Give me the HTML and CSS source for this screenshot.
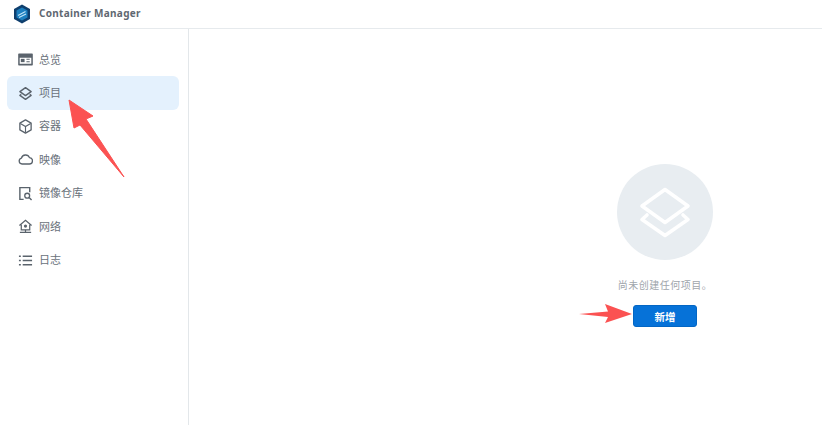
FILE: index.html
```html
<!DOCTYPE html>
<html lang="zh-CN">
<head>
    <meta charset="UTF-8">
    <title>Container Manager</title>
    <link rel="stylesheet" href="styles.css">
</head>
<body>
    <div class="window">
        <!-- Title bar -->
        <div class="title-bar">
            <svg class="logo" width="18" height="20" viewBox="0 0 18 20">
                <path d="M9 0.5L17 5v10l-8 4.500L1 15V5z" fill="#0f3f6e"/>
                <path d="M9 3.500L14.500 6.600v6.800L9 16.500l-5.500-3.100V6.600z" fill="#1c7fc0"/>
                <path d="M5 11.500L12.500 7.500M6 13.500l7-3.500" stroke="#bfe4f7" stroke-width="1.200" fill="none"/>
            </svg>
            <span class="app-name">Container Manager</span>
        </div>

        <div class="main">
            <!-- Sidebar -->
            <div class="sidebar">
                <div class="nav-item">
                    <svg class="nav-icon" viewBox="0 0 16 16">
                        <path fill-rule="evenodd" d="M1 1.500h14a.8.8 0 0 1 .8.8v11.400a.8.8 0 0 1-.8.8H1a.8.8 0 0 1-.8-.8V2.300A.8.8 0 0 1 1 1.500zm.8 4.500v6.500h12.400V6z" fill="#5a636c"/>
                        <rect x="3" y="7.300" width="4" height="3.500" fill="#5a636c"/>
                        <path d="M9 7.800h3.500M9 10.300h3.500" stroke="#5a636c" stroke-width="1.100"/>
                    </svg>
                    <span>总览</span>
                </div>
                <div class="nav-item active">
                    <svg class="nav-icon" viewBox="0 0 16 16">
                        <path d="M8 1.800L14 6l-6 4.200L2 6z" fill="none" stroke="#5a636c" stroke-width="1.500" stroke-linejoin="round"/>
                        <path d="M3.500 9L2 10l6 4.300L14 10l-1.500-1" fill="none" stroke="#5a636c" stroke-width="1.500" stroke-linejoin="round"/>
                    </svg>
                    <span>项目</span>
                </div>
                <div class="nav-item">
                    <svg class="nav-icon" viewBox="0 0 16 16">
                        <path d="M8 1l6 3.400v7.200L8 15l-6-3.400V4.400z" fill="none" stroke="#5a636c" stroke-width="1.400" stroke-linejoin="round"/>
                        <path d="M2.500 4.800L8 8l5.500-3.200M8 8v6.500" fill="none" stroke="#5a636c" stroke-width="1.200"/>
                    </svg>
                    <span>容器</span>
                </div>
                <div class="nav-item">
                    <svg class="nav-icon" viewBox="0 0 16 16">
                        <path d="M4.300 12.800a3.200 3.200 0 0 1-.6-6.300A4.500 4.500 0 0 1 12.200 6a3.400 3.400 0 0 1-.3 6.800z" fill="none" stroke="#5a636c" stroke-width="1.400" stroke-linejoin="round"/>
                    </svg>
                    <span>映像</span>
                </div>
                <div class="nav-item">
                    <svg class="nav-icon" viewBox="0 0 16 16">
                        <path d="M6 14.300H2V1.700h10.500v5" fill="none" stroke="#5a636c" stroke-width="1.500"/>
                        <circle cx="9.800" cy="10.300" r="2.600" fill="none" stroke="#5a636c" stroke-width="1.400"/>
                        <path d="M11.800 12.300l2.700 2.700" stroke="#5a636c" stroke-width="1.500"/>
                    </svg>
                    <span>镜像仓库</span>
                </div>
                <div class="nav-item">
                    <svg class="nav-icon" viewBox="0 0 16 16">
                        <path d="M1.500 7L8 1.500 14.500 7M3.500 6v5.500h9V6" fill="none" stroke="#5a636c" stroke-width="1.300"/>
                        <circle cx="8" cy="7.500" r="1.700" fill="#5a636c"/>
                        <path d="M8 11.500v2.500M2 14.300h12" stroke="#5a636c" stroke-width="1.300"/>
                    </svg>
                    <span>网络</span>
                </div>
                <div class="nav-item">
                    <svg class="nav-icon" viewBox="0 0 16 16">
                        <path d="M5 3.500h10M5 8h10M5 12.500h10" stroke="#5a636c" stroke-width="1.500"/>
                        <path d="M1 3.500h2M1 8h2M1 12.500h2" stroke="#5a636c" stroke-width="1.500"/>
                    </svg>
                    <span>日志</span>
                </div>
            </div>

            <!-- Empty state -->
            <div class="content">
                <div class="empty-circle">
                    <svg width="56" height="52" viewBox="0 0 56 52">
                        <path d="M28 3.500L51 20 28 36.500 5 20z" fill="none" stroke="#fff" stroke-width="3.600" stroke-linejoin="round"/>
                        <path d="M10 29L5 33.500 28 49.500 51 33.500 46 29" fill="none" stroke="#fff" stroke-width="3.600" stroke-linejoin="round" stroke-linecap="round"/>
                    </svg>
                </div>
                <p class="empty-text">尚未创建任何项目。</p>
                <button class="add-btn">新增</button>
            </div>
        </div>

        <!-- Annotation arrows drawn over the screenshot -->
        <svg class="arrow arrow-nav" width="60" height="82" viewBox="0 0 60 82">
            <path d="M1 1L25 17 18 20 56 78 12 26 6 29z" fill="#fb5252" stroke="#fb5252" stroke-linejoin="round"/>
        </svg>
        <svg class="arrow arrow-btn" width="54" height="20" viewBox="0 0 54 20">
            <path d="M0 10L29 7.500 26 0 53 10 26 19 29 13z" fill="#fb5252"/>
        </svg>
    </div>
</body>
</html>
```

FILE: styles.css
```css
html, body {
    margin: 0;
    padding: 0;
    height: 100%;
}
body {
    font-family: "Noto Sans", "Noto Sans CJK SC", sans-serif;
    background-color: #fff;
    overflow: hidden;
}
.window {
    position: relative;
    height: 425px;
    display: flex;
    flex-direction: column;
}
.title-bar {
    height: 28px;
    display: flex;
    align-items: center;
    padding-left: 13px;
    border-bottom: 1px solid #e6eaed;
    flex-shrink: 0;
}
.logo {
    margin-right: 8px;
}
.app-name {
    font-size: 10px;
    font-weight: 700;
    letter-spacing: 0.3px;
    color: #5f6871;
    padding-bottom: 2px;
}
.main {
    display: flex;
    flex-grow: 1;
}
.sidebar {
    width: 189px;
    box-sizing: border-box;
    padding: 14px 9px 0 7px;
    border-right: 1px solid #e3e7ea;
    flex-shrink: 0;
}
.nav-item {
    height: 33.400px;
    display: flex;
    align-items: center;
    padding-left: 11px;
    border-radius: 6px;
    font-size: 11px;
    color: #6a727b;
}
.nav-item span {
    padding-bottom: 2px;
}
.nav-item.active {
    background-color: #e4f1fd;
}
.nav-icon {
    width: 15px;
    height: 15px;
    margin-right: 6px;
    flex-shrink: 0;
}
.content {
    flex-grow: 1;
    display: flex;
    flex-direction: column;
    align-items: center;
    padding: 135px 0 0 319px;
}
.empty-circle {
    width: 96px;
    height: 96px;
    border-radius: 50%;
    background-color: #e8edf1;
    display: flex;
    align-items: center;
    justify-content: center;
}
.empty-text {
    margin: 18px 0 0;
    font-size: 10px;
    line-height: 14px;
    color: #a0a6ac;
    letter-spacing: 0.5px;
}
.add-btn {
    margin-top: 13px;
    width: 64px;
    height: 22px;
    padding: 0;
    border: 1px solid #0366c4;
    border-radius: 3px;
    background-color: #0672d8;
    color: #fff;
    font-family: inherit;
    font-size: 10.500px;
    font-weight: 700;
}
.arrow {
    position: absolute;
}
.arrow-nav {
    left: 68px;
    top: 99px;
}
.arrow-btn {
    left: 579px;
    top: 304px;
}
```
